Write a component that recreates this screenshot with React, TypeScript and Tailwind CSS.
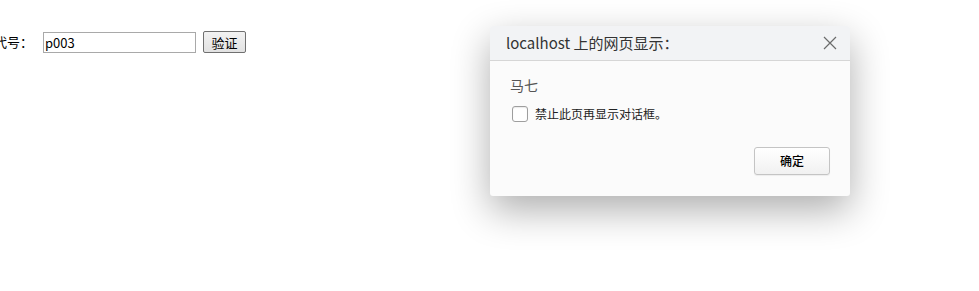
import React from "react";

const cjk = { fontFamily: '"Noto Sans CJK SC", "Noto Sans", sans-serif' };

const CloseIcon = () => (
  <svg width="14" height="14" viewBox="0 0 14 14" className="block">
    <path d="M1 1 L13 13 M13 1 L1 13" stroke="#6b6b6b" strokeWidth="1.2" fill="none" />
  </svg>
);

export default function App() {
  return (
    <div className="relative h-[291px] w-[979px] overflow-hidden bg-white" style={cjk}>
      <div className="flex items-center pt-[31px] ml-[-6px] text-[13px] text-black">
        <span className="leading-[22px]">代号：</span>
        <input
          defaultValue="p003"
          className="ml-[10px] h-[21px] w-[153px] border border-[#a9a9a9] px-[1px] text-[13px] text-black outline-none"
          style={cjk}
        />
        <button className="ml-[7px] h-[22px] w-[43px] rounded-[2px] border border-[#707070] bg-gradient-to-b from-[#f2f2f2] to-[#e2e2e2] text-[13px] leading-none text-black">
          验证
        </button>
      </div>

      <div className="absolute left-[490px] top-[26px] flex h-[170px] w-[360px] flex-col overflow-hidden rounded-[3px] bg-[#fbfbfb] shadow-[0_14px_38px_rgba(0,0,0,0.32)]">
        <div className="flex h-[35px] items-center justify-between border-b border-[#d6d6d6] bg-[#f2f3f5] pl-4 pr-[13px]">
          <span className="text-[15px] text-[#333]">localhost 上的网页显示：</span>
          <CloseIcon />
        </div>
        <div className="flex flex-1 flex-col px-5">
          <div className="mt-[14px] text-[14px] leading-[20px] text-[#555]">马七</div>
          <label className="mt-[10px] flex items-center">
            <span className="ml-[2px] h-[16px] w-[16px] rounded-[3px] border border-[#9e9e9e] bg-white shadow-[inset_0_1px_1px_rgba(0,0,0,0.08)]" />
            <span className="ml-[7px] text-[12px] text-[#222]">禁止此页再显示对话框。</span>
          </label>
          <div className="mt-auto mb-[21px] flex justify-end">
            <button className="h-[28px] w-[76px] rounded-[3px] border border-[#c4c4c4] bg-gradient-to-b from-[#ffffff] to-[#f1f1f1] text-[12px] font-medium text-black shadow-[0_1px_1px_rgba(0,0,0,0.06)]">
              确定
            </button>
          </div>
        </div>
      </div>
    </div>
  );
}
